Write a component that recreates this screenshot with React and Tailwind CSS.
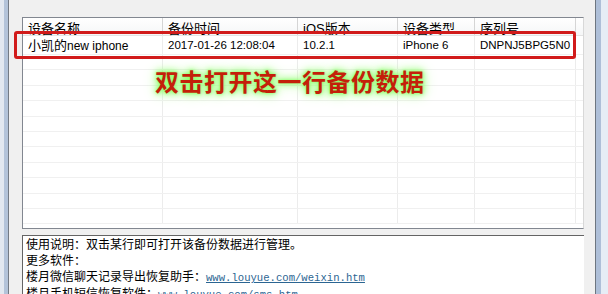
import React from 'react';

const cols = [
  { name: '设备名称', w: 'w-[140px]', value: '小凯的new iphone' },
  { name: '备份时间', w: 'w-[135px]', value: '2017-01-26 12:08:04' },
  { name: 'iOS版本', w: 'w-[100px]', value: '10.2.1' },
  { name: '设备类型', w: 'w-[77px]', value: 'iPhone 6' },
  { name: '序列号', w: 'w-[101px]', value: 'DNPNJ5BPG5N0' },
];

const emptyRows = Array.from({ length: 11 });

const font = "font-['Liberation_Sans','Noto_Sans_CJK_SC',sans-serif]";

const App = () => {
  return (
    <div className={`w-[608px] h-[294px] overflow-hidden flex bg-[#f0f0f0] text-black ${font}`}>
      {/* left window frame */}
      <div className="flex h-full shrink-0">
        <div className="w-[4px] bg-[#e2e8f0]" />
        <div className="w-[4px] bg-[#b3c3d9]" />
        <div className="w-[1px] bg-[#737a84]" />
      </div>

      {/* main panel */}
      <div className="relative w-[586px] h-full shrink-0 pl-[13px] pr-[11px] pt-[17px] flex flex-col">
        {/* list view */}
        <div className="h-[212px] shrink-0 bg-white border border-[#828790] border-r-[#d8d8d8] flex flex-col overflow-hidden">
          {/* header */}
          <div className="flex h-[18px] shrink-0 bg-gradient-to-b from-white to-[#f5f6f7] border-b border-[#e3e3e3]">
            {cols.map((c) => (
              <div key={c.name} className={`${c.w} shrink-0 border-r border-[#d5d5d5] pl-[5px] text-[13px] leading-[18px] pt-[2px]`}>
                {c.name}
              </div>
            ))}
            <div className="flex-1" />
          </div>

          {/* data row */}
          <div className="flex h-[19px] shrink-0 border-b border-[#f0f0f0]">
            {cols.map((c, i) => (
              <div
                key={c.name}
                className={`${c.w} shrink-0 border-r border-[#ececec] pl-[5px] leading-[19px] whitespace-nowrap ${i === 0 ? 'text-[13px]' : 'text-[11.5px]'}`}
              >
                {i === 0 ? (
                  <>
                    小凯的<span className="text-[12px]">new iphone</span>
                  </>
                ) : (
                  c.value
                )}
              </div>
            ))}
            <div className="flex-1" />
          </div>

          {/* empty rows */}
          {emptyRows.map((_, r) => (
            <div key={r} className="flex h-[15.4px] shrink-0 border-b border-[#f0f0f0]">
              {cols.map((c) => (
                <div key={c.name} className={`${c.w} shrink-0 border-r border-[#ececec]`} />
              ))}
              <div className="flex-1" />
            </div>
          ))}
        </div>

        {/* info text box */}
        <div className="mt-[6px] flex-1 bg-white border-t border-l border-[#646464] pl-[3px] pt-[1px] text-[12px] leading-[16px] whitespace-nowrap">
          <div>使用说明：双击某行即可打开该备份数据进行管理。</div>
          <div>更多软件：</div>
          <div>
            楼月微信聊天记录导出恢复助手：
            <span className="font-['Liberation_Mono',monospace] text-[10.6px] text-[#2b6592] underline">www.louyue.com/weixin.htm</span>
          </div>
          <div>
            楼月手机短信恢复软件：
            <span className="font-['Liberation_Mono',monospace] text-[10.6px] text-[#2b6592] underline">www.louyue.com/sms.htm</span>
          </div>
        </div>

        {/* red highlight box drawn over the list */}
        <div className="absolute left-[5px] top-[31px] w-[562px] h-[28px] border-[3px] border-[#d11b1b] rounded-[3px] pointer-events-none" />

        {/* annotation */}
        <div className="absolute left-[146px] top-[69px] text-[24px] leading-[28px] font-bold text-[#c41f0a] tracking-[0.5px] whitespace-nowrap [text-shadow:0_0_3px_#8cff6a,0_0_6px_#8cff6a,0_0_10px_#a6ff88,0_0_16px_#c4ffb0]">
          双击打开这一行备份数据
        </div>
      </div>

      {/* right window frame */}
      <div className="flex h-full shrink-0">
        <div className="w-[1px] bg-[#6d7680]" />
        <div className="w-[5px] bg-[#aebfd8]" />
        <div className="w-[7px] bg-[#e6edf5]" />
      </div>
    </div>
  );
};

export default App;
